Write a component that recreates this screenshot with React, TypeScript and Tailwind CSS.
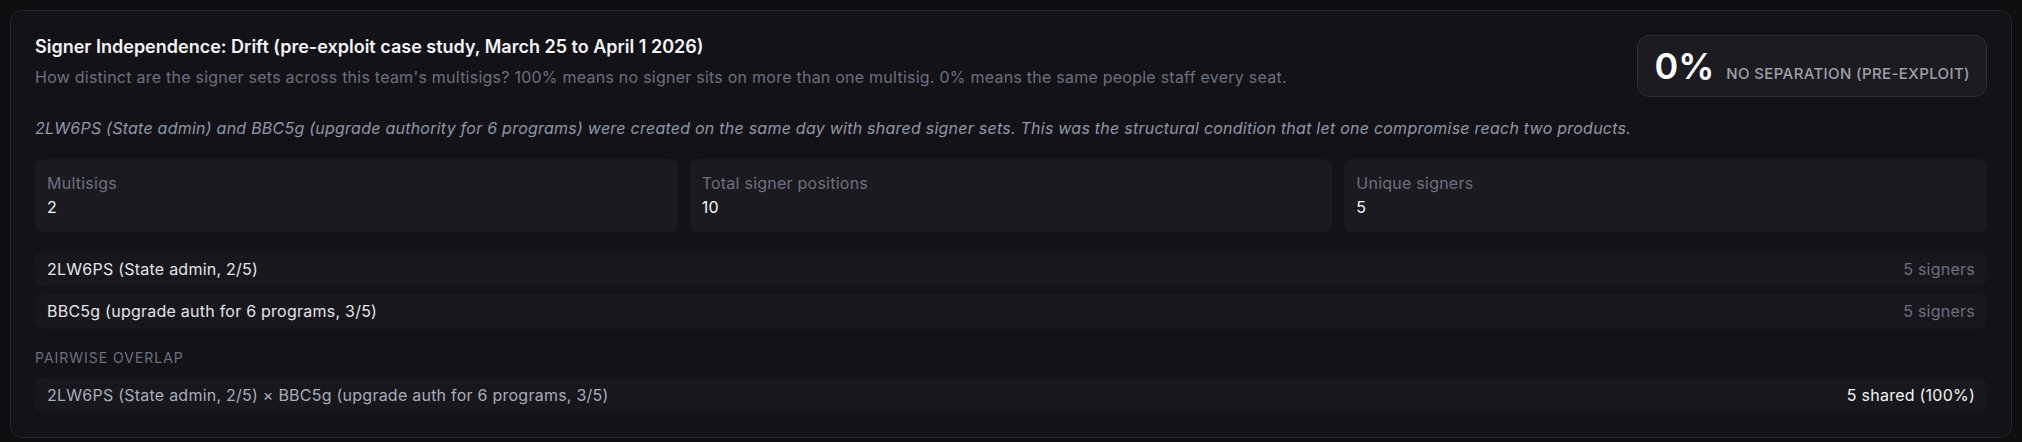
const stats = [
  { label: "Multisigs", value: "2" },
  { label: "Total signer positions", value: "10" },
  { label: "Unique signers", value: "5" },
];

const multisigs = [
  { name: "2LW6PS (State admin, 2/5)", signers: "5 signers" },
  { name: "BBC5g (upgrade auth for 6 programs, 3/5)", signers: "5 signers" },
];

export default function App() {
  return (
    <div className="min-h-screen bg-[#0f0f12] p-2.5 font-['Inter',sans-serif] antialiased">
      <div className="rounded-xl border border-[#242429] bg-[#131317] p-6">
        <div className="flex items-start justify-between gap-6">
          <div>
            <h2 className="text-lg leading-6 font-semibold text-zinc-100">
              Signer Independence: Drift (pre-exploit case study, March 25 to April 1 2026)
            </h2>
            <p className="mt-1.5 text-base leading-6 tracking-[0.015em] text-[#6b7080]">
              How distinct are the signer sets across this team's multisigs? 100% means no signer sits on more than one multisig. 0% means the same people staff every seat.
            </p>
          </div>
          <div className="flex shrink-0 items-baseline gap-3 rounded-xl border border-[#2e2e34] bg-[#1c1c20] px-4 py-3">
            <span className="text-4xl leading-9 font-semibold text-white">0%</span>
            <span className="text-[15px] leading-5 font-medium tracking-wide uppercase text-zinc-400">No separation (pre-exploit)</span>
          </div>
        </div>

        <p className="mt-[19px] text-base leading-6 tracking-[0.015em] italic text-[#8e97a8]">
          2LW6PS (State admin) and BBC5g (upgrade authority for 6 programs) were created on the same day with shared signer sets. This was the structural condition that let one compromise reach two products.
        </p>

        <div className="mt-[19px] grid grid-cols-3 gap-3">
          {stats.map((s) => (
            <div key={s.label} className="rounded-lg bg-[#1b1b1f] px-3 pt-3 pb-[13px] text-base leading-6 tracking-[0.015em]">
              <div className="text-[#6b7080]">{s.label}</div>
              <div className="text-zinc-100">{s.value}</div>
            </div>
          ))}
        </div>

        <div className="mt-[19px] space-y-1.5">
          {multisigs.map((m) => (
            <div key={m.name} className="flex items-center justify-between rounded-lg bg-[#18181c] px-3 py-1.5 text-base leading-6 tracking-[0.015em]">
              <span className="text-zinc-200">{m.name}</span>
              <span className="text-[#6b7080]">{m.signers}</span>
            </div>
          ))}
        </div>

        <div className="mt-[19px] text-sm leading-5 tracking-[0.07em] uppercase text-[#6b7080]">Pairwise overlap</div>
        <div className="mt-[9px] flex items-center justify-between rounded-lg bg-[#18181c] px-3 py-1.5 text-base leading-6 tracking-[0.015em]">
          <span className="text-[#a6adbb]">2LW6PS (State admin, 2/5) × BBC5g (upgrade auth for 6 programs, 3/5)</span>
          <span className="text-zinc-100">5 shared (100%)</span>
        </div>
      </div>
    </div>
  );
}
